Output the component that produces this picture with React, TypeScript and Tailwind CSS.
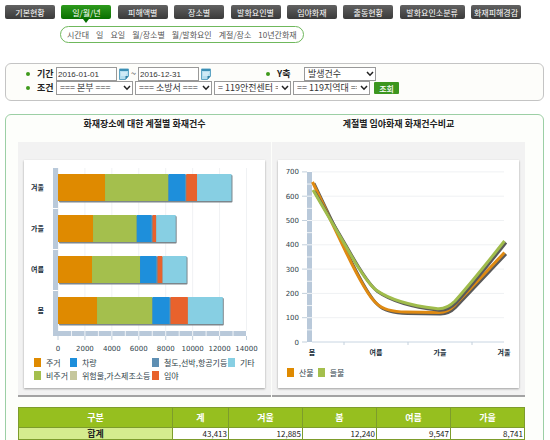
import { useState } from 'react';

const TABS = ['기본현황', '일/월/년', '피해액별', '장소별', '발화요인별', '임야화재', '출동현황', '발화요인소분류', '화재피해경감'];
const SUB_MENU = ['시간대', '일', '요일', '월/장소별', '월/발화요인', '계절/장소', '10년간화재'];

const COLORS = ['#df8a00', '#a4bf4d', '#1e8fdb', '#c6c79c', '#5e8fb3', '#e8622c', '#87cfe3'];
const PLACES = ['주거', '비주거', '차량', '위험물,가스제조소등', '철도,선박,항공기등', '임야', '기타'];

const SEASON_BARS = [
  { name: '겨울', values: [3494, 4708, 1270, 10, 45, 800, 2558] },
  { name: '가을', values: [2602, 3246, 1120, 10, 45, 270, 1448] },
  { name: '여름', values: [2528, 3568, 1230, 10, 60, 370, 1781] },
  { name: '봄', values: [2899, 4114, 1290, 10, 45, 1290, 2592] },
];

const TOTALS = ['43,413', '12,885', '12,240', '9,547', '8,741'];

const X0 = 34;
const PX_PER_UNIT = 188.5 / 14000;

function Tab({ label, active, onClick }: { label: string; active: boolean; onClick: () => void }) {
  return (
    <button
      onClick={onClick}
      className={`relative h-[14px] rounded-[2px] text-[8px] leading-[13px] text-white whitespace-nowrap ${label.length > 6 ? 'w-[65px]' : 'w-[50px]'} ${active ? 'bg-linear-to-b from-[#2d9a1c] to-[#067000]' : 'bg-linear-to-b from-[#626262] to-[#3a3a3a]'}`}
    >
      {label}
      {active && (
        <svg className="absolute left-1/2 top-full -translate-x-1/2" width="6" height="4" viewBox="0 0 6 4" aria-hidden="true">
          <path d="M0 0h6L3 4z" fill="#067000" />
        </svg>
      )}
    </button>
  );
}

function FieldLabel({ htmlFor, children, wide }: { htmlFor: string; children: string; wide?: boolean }) {
  return (
    <label htmlFor={htmlFor} className={`flex items-center gap-[7px] text-[9px] leading-[14px] font-bold text-[#222] ${wide ? 'w-[38px]' : 'w-[30px]'}`}>
      <span className="size-1 rounded-full bg-[#3f9a1c]" />
      {children}
    </label>
  );
}

function DateField({ id, label, value }: { id: string; label: string; value: string }) {
  return (
    <span className="flex items-center gap-[2px]">
      <input id={id} aria-label={label} defaultValue={value} className="w-[61px] h-[14px] border border-[#999] bg-white pl-px font-['Liberation_Sans',sans-serif] text-[8px] text-[#333]" />
      <button type="button" aria-label={`${label} 달력`}>
        <svg width="10" height="12" viewBox="0 0 10 12" className="block">
          <path d="M.5 1h9v7L6.500 11.500H.5z" fill="#b5deef" stroke="#5fa5c4" />
          <path d="M1 1h8v2H1z" fill="#3b8fb5" />
          <path d="M2 5h6M2 7h5" stroke="#e9f7fd" />
          <path d="M9.500 8L6.500 11.500V8z" fill="#2f7fa3" />
        </svg>
      </button>
    </span>
  );
}

function SelectField({ id, label, value, size }: { id: string; label: string; value: string; size?: 'sm' }) {
  return (
    <span className={`relative ${size === 'sm' ? 'w-[72px]' : 'w-[77px]'}`}>
      <select id={id} aria-label={label} className="block w-full h-[14px] appearance-none border border-[#999] bg-white pl-[3px] pr-3 text-[9px] leading-[12px] text-[#333]">
        <option>{value}</option>
      </select>
      <svg className="pointer-events-none absolute right-[2px] top-[4px]" width="8" height="6" viewBox="0 0 8 6" fill="none" aria-hidden="true">
        <path d="M1 1l3 3.200L7 1" stroke="#222" strokeWidth="1.500" />
      </svg>
    </span>
  );
}

function Swatch({ color, label }: { color: string; label: string }) {
  return (
    <li className="flex items-center gap-[5px] whitespace-nowrap text-[8px] leading-[13px] text-[#2f3f4a]">
      <span className="w-[7px] h-[9px] shrink-0" style={{ backgroundColor: color }} />
      {label}
    </li>
  );
}

function BarChart() {
  return (
    <svg viewBox="0 0 241 193" className="block w-full font-['DejaVu_Sans','Noto_Sans_CJK_KR',sans-serif] text-[7px]">
      {Array.from({ length: 8 }, (_, i) => {
        const x = X0 + i * 2000 * PX_PER_UNIT;
        return (
          <g key={i}>
            <path d={`M${x} 8V171`} stroke="#f0f2f4" />
            <path d={`M${x} 176V180`} stroke="#c3d0dc" />
            <text x={x} y="191" textAnchor="middle" fill="#2f3f4a">{i * 2000}</text>
          </g>
        );
      })}
      <rect x="29" y="171" width="193" height="5" fill="#b9c9da" />
      {Array.from({ length: 13 }, (_, i) => (
        <path key={i} d={`M${X0 + (i + 1) * 1000 * PX_PER_UNIT} 171v5`} stroke="#fff" strokeWidth="0.8" />
      ))}
      {SEASON_BARS.map((row, r) => {
        const top = 14 + r * 41;
        let sum = 0;
        const total = row.values.reduce((a, b) => a + b, 0);
        return (
          <g key={row.name}>
            <rect x="29" y={top - 6} width="5" height="40" fill="#b9c9da" />
            <text x="20" y={top + 16} textAnchor="end" fill="#1b2f3b" fontWeight="700">{row.name}</text>
            <rect x={X0 + 1} y={top + 1} width={total * PX_PER_UNIT} height="27.500" rx="1" fill="#7c868c" />
            {row.values.map((v, i) => {
              const x = X0 + sum * PX_PER_UNIT;
              sum += v;
              return <rect key={i} x={x} y={top} width={v * PX_PER_UNIT} height="27" fill={COLORS[i]} />;
            })}
          </g>
        );
      })}
    </svg>
  );
}

const WOODS = 'M34.500 22L67 90Q88 134 98 143Q107 152 128 152L160 152.500Q169 153 176 146L226.500 92.500';
const FIELDS = 'M35 30L70 90Q88 122 98 130Q118 144 158 148.500Q168 150 177 141Q194 122 226.500 81';

function LineChart() {
  return (
    <svg viewBox="0 0 241 200" className="block w-full font-['DejaVu_Sans','Noto_Sans_CJK_KR',sans-serif] text-[7px]">
      {Array.from({ length: 8 }, (_, i) => {
        const y = 182 - i * 24.3;
        return (
          <g key={i}>
            <path d={`M34 ${y}H226`} stroke={i ? '#eff1f3' : '#c8d5e2'} />
            <path d={`M24 ${y}h5`} stroke="#c3d0dc" />
            <text x="21" y={y + 2.5} textAnchor="end" fill="#2f3f4a">{i * 100}</text>
          </g>
        );
      })}
      <rect x="29" y="12" width="5" height="170" fill="#b9c9da" />
      {Array.from({ length: 13 }, (_, i) => (
        <path key={i} d={`M29 ${182 - (i + 1) * 12.15}h5`} stroke="#fff" strokeWidth="0.8" />
      ))}
      <path d="M66 182v3M130 182v3M194 182v3" stroke="#c3d0dc" />
      {['봄', '여름', '가을', '겨울'].map((s, i) => (
        <text key={s} x={34 + i * 64} y="195" textAnchor="middle" fill="#1b2f3b" fontWeight="700">{s}</text>
      ))}
      <g fill="none" strokeWidth="3">
        <path d={WOODS} stroke="#5a5a5a" transform="translate(1.500 1.500)" />
        <path d={WOODS} stroke="#df8a12" />
        <path d={FIELDS} stroke="#5a5a5a" transform="translate(1.500 1.500)" />
        <path d={FIELDS} stroke="#a0bc4c" />
      </g>
    </svg>
  );
}

function ChartBox({ title, children }: { title: string; children: React.ReactNode }) {
  return (
    <section>
      <h2 className="h-[27px] text-center text-[9px] leading-[18px] font-bold text-[#222]">{title}</h2>
      <div className="border-b-2 border-[#a3a3a3] bg-[#f2f2f2] px-[6px] pt-[18px] pb-[7px]">
        <div className="h-[228px] bg-white shadow-[0_1px_2px_rgba(0,0,0,0.35)]">{children}</div>
      </div>
    </section>
  );
}

export default function App() {
  const [tab, setTab] = useState('일/월/년');

  return (
    <div className="h-screen overflow-hidden bg-white pt-[5px] pl-[5px] pr-[6px] font-['Noto_Sans_CJK_KR',sans-serif]">
      <nav className="flex justify-between pr-[23px]">
        {TABS.map((t) => (
          <Tab key={t} label={t} active={t === tab} onClick={() => setTab(t)} />
        ))}
      </nav>
      <div className="ml-[55px] mt-[7px] flex h-[17px] w-fit items-center gap-[7px] rounded-full border border-[#6fb85c] bg-white px-[6px] text-[8px] leading-[15px] text-[#555]">
        {SUB_MENU.map((m) => (
          <a key={m} href="#" className="whitespace-nowrap">{m}</a>
        ))}
      </div>

      <form className="mt-5 h-[38px] rounded-md border border-[#c4c4c4] bg-[#fdfdfa] pl-5 pt-[3px]" onSubmit={(e) => e.preventDefault()}>
        <div className="flex h-[14px] items-center">
          <FieldLabel htmlFor="from">기간</FieldLabel>
          <DateField id="from" label="시작일" value="2016-01-01" />
          <span className="w-[9px] text-center text-[9px] leading-[14px] text-[#333]">~</span>
          <DateField id="to" label="종료일" value="2016-12-31" />
          <span className="w-[55px]" />
          <FieldLabel htmlFor="yaxis" wide>Y축</FieldLabel>
          <SelectField id="yaxis" label="Y축" value="발생건수" size="sm" />
        </div>
        <div className="flex h-[14px] items-center">
          <FieldLabel htmlFor="hq">조건</FieldLabel>
          <div className="flex gap-[2px]">
            <SelectField id="hq" label="본부" value="=== 본부 ===" />
            <SelectField id="station" label="소방서" value="=== 소방서 ===" />
            <SelectField id="center" label="안전센터" value="= 119안전센터 =" />
            <SelectField id="area" label="지역대" value="== 119지역대 ==" />
          </div>
          <button type="submit" className="ml-1 h-3 w-[25px] rounded-[1px] bg-[#3c961f] text-[8px] leading-[11px] font-medium text-white">조회</button>
        </div>
      </form>

      <main className="mt-[13px] rounded-md border border-[#9ccfa5] bg-[#fdfefb] pl-3 pr-[18px] pb-6">
        <div className="grid grid-cols-2 gap-px">
          <ChartBox title="화재장소에 대한 계절별 화재건수">
            <BarChart />
            <ul className="ml-[10px] mt-[3px] grid grid-flow-col grid-rows-2 grid-cols-[36px_82px_76px_auto]">
              {PLACES.map((p, i) => (
                <Swatch key={p} color={COLORS[i]} label={p} />
              ))}
            </ul>
          </ChartBox>
          <ChartBox title="계절별 임야화재 화재건수비교">
            <LineChart />
            <ul className="ml-[9px] mt-[6px] flex gap-1">
              <Swatch color={COLORS[0]} label="산불" />
              <Swatch color={COLORS[1]} label="들불" />
            </ul>
          </ChartBox>
        </div>

        <table className="mt-[10px] w-full table-fixed border-collapse text-[#222]">
          <thead>
            <tr className="h-5 bg-[#96bf1f] text-[9px] leading-[14px] text-white">
              <th className="w-[154px] border border-[#7d9c2c]">구분</th>
              <th className="w-[56px] border border-[#7d9c2c]">계</th>
              {['겨울', '봄', '여름', '가을'].map((s) => (
                <th key={s} className="border border-[#7d9c2c]">{s}</th>
              ))}
            </tr>
          </thead>
          <tbody>
            <tr className="h-3 bg-white text-[8px] leading-[11px]">
              <th className="border border-[#7d9c2c] bg-[#d5ec8e] text-[9px] leading-[11px]">합계</th>
              {TOTALS.map((n) => (
                <td key={n} className="border border-[#7d9c2c] pr-px text-right">{n}</td>
              ))}
            </tr>
          </tbody>
        </table>
      </main>
    </div>
  );
}
